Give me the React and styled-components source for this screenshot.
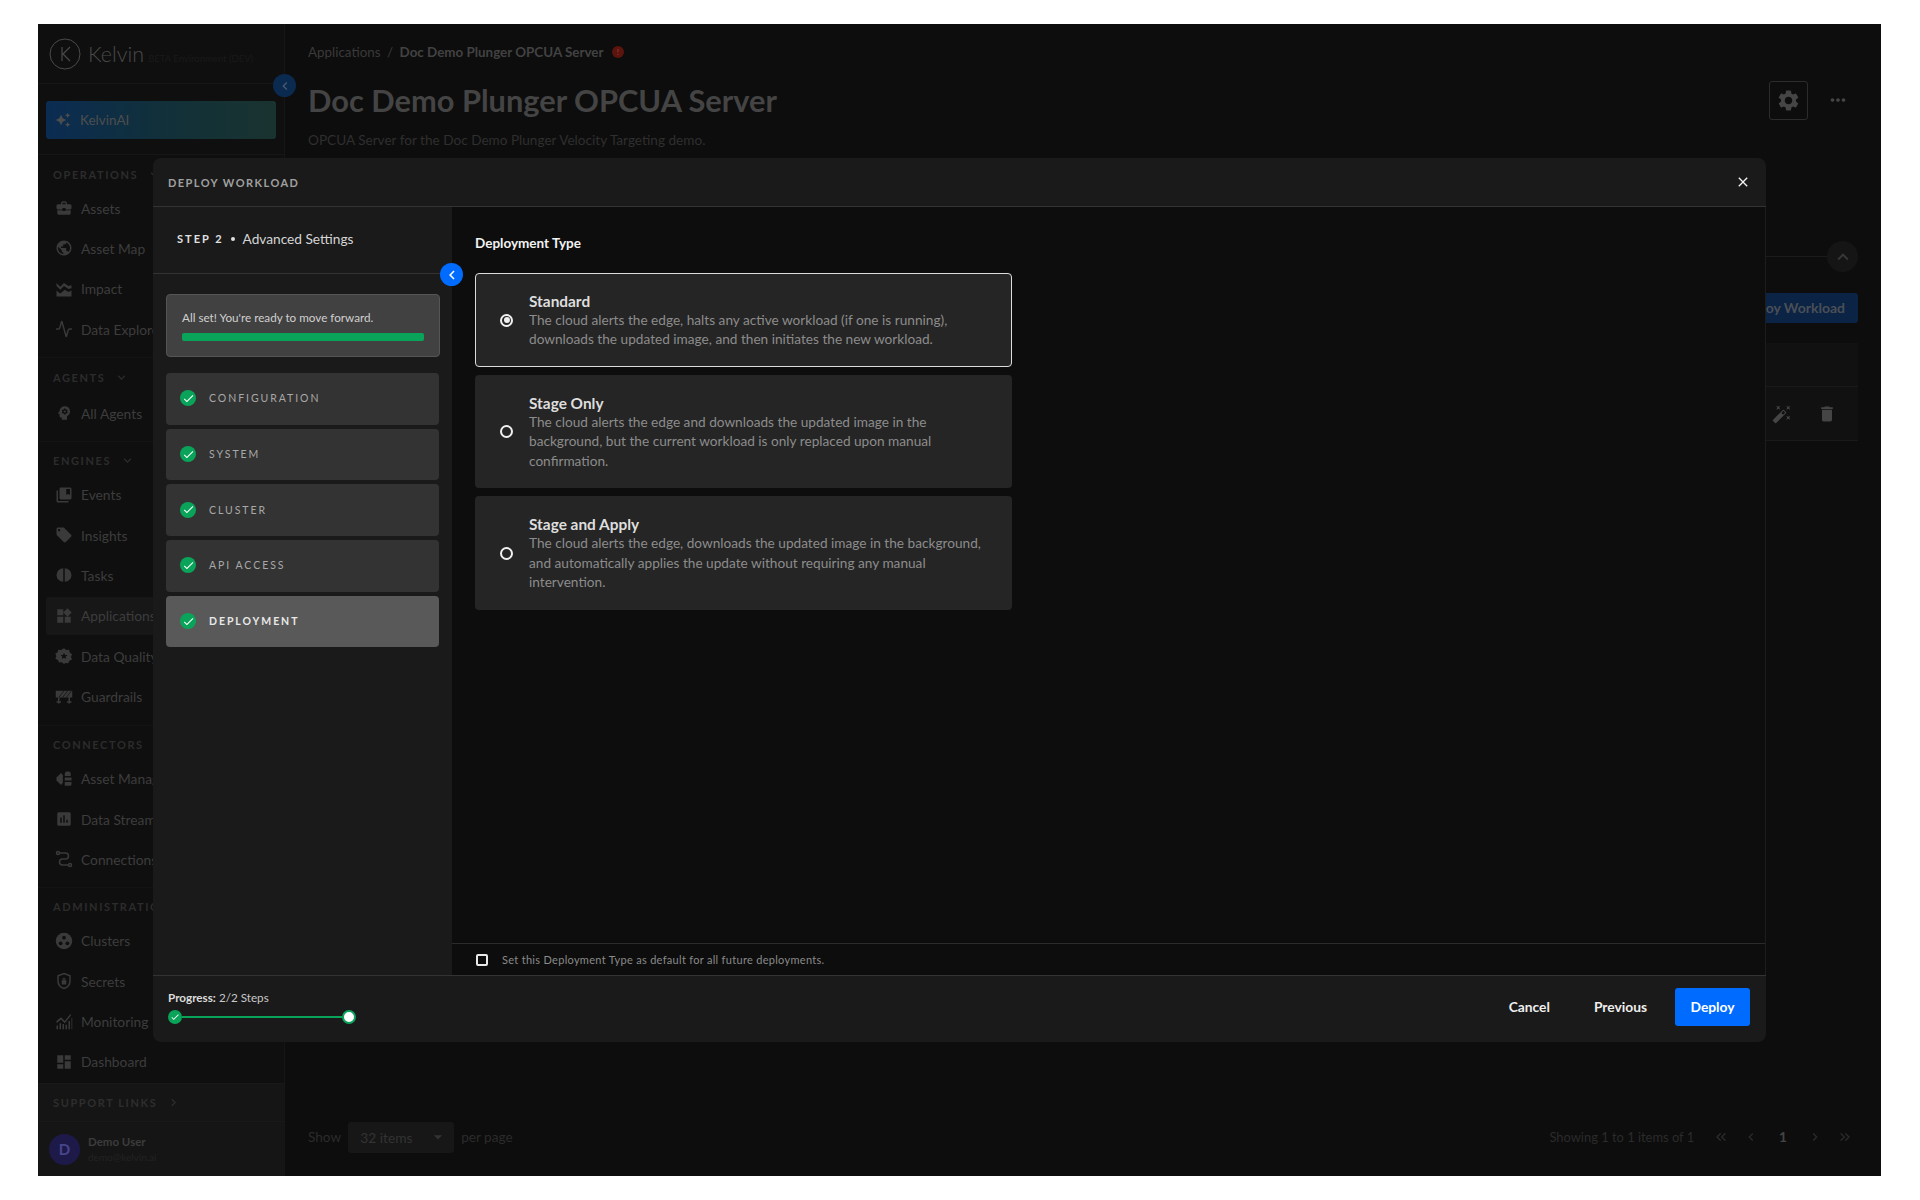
import React from 'react';
import styled, { createGlobalStyle } from 'styled-components';
import {
  MdBusinessCenter,
  MdPublic,
  MdCollectionsBookmark,
  MdLocalOffer,
  MdWidgets,
  MdAssessment,
  MdDashboard,
  MdSettings,
  MdMoreHoriz,
  MdDelete,
  MdAutoFixHigh,
  MdCheck,
  MdClose,
  MdChevronLeft,
  MdExpandMore,
  MdExpandLess,
  MdChevronRight,
  MdArrowDropDown,
  MdAutoAwesome,
  MdPsychology,
} from 'react-icons/md';
import { LuActivity, LuChevronsLeft, LuChevronsRight } from 'react-icons/lu';

const font = `'Lato', 'Open Sans', sans-serif`;

const GlobalStyle = createGlobalStyle`
  html, body {
    margin: 0;
    background: #fff;
  }
  body {
    font-family: ${font};
  }
  * {
    box-sizing: border-box;
  }
`;

const Viewport = styled.div`
  width: 1920px;
  height: 1200px;
  padding: 24px 39px 24px 38px;
`;

const Frame = styled.div`
  position: relative;
  display: flex;
  height: 1152px;
  background: #0d0d0d;
  overflow: hidden;
`;

const Sidebar = styled.aside`
  position: relative;
  display: flex;
  flex-direction: column;
  width: 247px;
  flex-shrink: 0;
  background: #0f0f0f;
  border-right: 1px solid #161616;
`;

const LogoRow = styled.div`
  display: flex;
  align-items: center;
  height: 61px;
  padding-left: 11px;
  border-bottom: 1px solid #161616;
`;

const LogoMark = styled.svg`
  width: 32px;
  height: 32px;
  margin-right: 7px;
`;

const LogoText = styled.span`
  font-size: 21.5px;
  font-weight: 300;
  color: #4a4a4a;
`;

const BetaTag = styled.span`
  margin: 10px 0 0 4px;
  font-size: 9.5px;
  color: #1a1a1a;
  white-space: nowrap;
`;

const CollapseDim = styled.span`
  position: absolute;
  top: 50px;
  right: -12px;
  z-index: 1;
  display: flex;
  align-items: center;
  justify-content: center;
  width: 23px;
  height: 23px;
  border-radius: 50%;
  background: #0b2a50;
  color: #4a5a70;
  font-size: 16px;
`;

const AiWrap = styled.div`
  padding: 17px 8px 15px;
  border-bottom: 1px solid #161616;
`;

const AiButton = styled.div`
  display: flex;
  align-items: center;
  gap: 9px;
  height: 38px;
  padding-left: 9px;
  border-radius: 3px;
  background: linear-gradient(90deg, #0b2c52 0%, #11303a 50%, #19332f 100%);
  color: #4d4d4d;
  font-size: 13.5px;
  svg {
    font-size: 16px;
  }
`;

const Section = styled.div`
  padding: ${(p) => p.$top ?? 6}px 0 ${(p) => p.$bottom ?? 7}px;
  border-bottom: 1px solid #141414;
  &:nth-last-child(2) {
    border-bottom: none;
  }
`;

const SectionLabel = styled.div`
  display: flex;
  align-items: center;
  gap: 9px;
  height: 26px;
  margin-bottom: ${(p) => p.$gap ?? 2}px;
  padding-left: 15px;
  font-size: 11px;
  font-weight: 700;
  letter-spacing: 1.6px;
  color: #2c2c2c;
  white-space: nowrap;
  svg {
    font-size: 15px;
  }
`;

const NavItem = styled.div`
  display: flex;
  align-items: center;
  gap: 8px;
  height: 38px;
  margin: 0 0 2.33px 8px;
  padding-left: 9px;
  border-radius: 3px;
  background: ${(p) => (p.$active ? '#171717' : 'transparent')};
  color: #3d3d3d;
  font-size: 13.8px;
  white-space: nowrap;
  svg {
    flex-shrink: 0;
    width: 18px;
    height: 18px;
    color: #3a3a3a;
  }
`;

const SupportArea = styled.div`
  margin-top: auto;
  background: #151515;
  border-top: 1px solid #191919;
`;

const SupportRow = styled.div`
  display: flex;
  align-items: center;
  gap: 9px;
  height: 38px;
  padding-left: 15px;
  font-size: 11px;
  font-weight: 700;
  letter-spacing: 1.6px;
  color: #2e2e2e;
  border-bottom: 1px solid #191919;
  svg {
    font-size: 15px;
  }
`;

const UserRow = styled.div`
  display: flex;
  align-items: center;
  gap: 8px;
  height: 54px;
  padding-left: 11px;
`;

const Avatar = styled.div`
  display: flex;
  align-items: center;
  justify-content: center;
  width: 31px;
  height: 31px;
  border-radius: 50%;
  background: #1d1a4a;
  color: #47468a;
  font-size: 15px;
  font-weight: 700;
`;

const UserName = styled.div`
  font-size: 11.5px;
  font-weight: 700;
  color: #3c3c3c;
`;

const UserMail = styled.div`
  margin-top: 3px;
  font-size: 10px;
  color: #232323;
`;

const Main = styled.main`
  position: relative;
  display: flex;
  flex-direction: column;
  flex: 1;
  padding: 0 23px;
`;

const Breadcrumb = styled.div`
  display: flex;
  align-items: center;
  gap: 6.5px;
  height: 56px;
  font-size: 13.4px;
  color: #3a3a3a;
  strong {
    font-weight: 700;
    color: #424242;
  }
`;

const ErrorDot = styled.span`
  display: flex;
  align-items: center;
  justify-content: center;
  width: 12px;
  height: 12px;
  margin-left: 2px;
  border-radius: 50%;
  background: #5c140e;
  color: #8a3a34;
  font-size: 8px;
  font-weight: 700;
`;

const HeadRow = styled.div`
  display: flex;
  align-items: center;
  justify-content: space-between;
  height: 40px;
`;

const PageTitle = styled.h1`
  margin: 0;
  font-size: 30.8px;
  font-weight: 700;
  color: #444;
`;

const HeadActions = styled.div`
  display: flex;
  align-items: center;
  gap: 19px;
  margin-right: 9px;
`;

const SettingsButton = styled.div`
  display: flex;
  align-items: center;
  justify-content: center;
  width: 39px;
  height: 39px;
  border: 1px solid #2c2c2c;
  border-radius: 3px;
  color: #454545;
  font-size: 25px;
`;

const MoreButton = styled.div`
  display: flex;
  color: #454545;
  font-size: 22px;
`;

const Description = styled.p`
  margin: 12px 0 0;
  font-size: 13.6px;
  color: #2f2f2f;
`;

const RuleRow = styled.div`
  display: flex;
  align-items: center;
  margin: 93px 0 0;
`;

const RuleLine = styled.div`
  flex: 1;
  height: 1px;
  background: #1b1b1b;
`;

const RoundToggle = styled.div`
  display: flex;
  align-items: center;
  justify-content: center;
  width: 31px;
  height: 31px;
  border-radius: 50%;
  background: #151515;
  color: #383838;
  font-size: 22px;
`;

const DeployRow = styled.div`
  display: flex;
  justify-content: flex-end;
  margin-top: 21px;
`;

const DimDeploy = styled.div`
  display: flex;
  align-items: center;
  height: 30px;
  padding: 0 13px 2px;
  border-radius: 3px;
  background: #0b2344;
  color: #4a4f57;
  font-size: 14px;
  font-weight: 700;
`;

const DimTable = styled.div`
  margin-top: 20px;
  background: #111;
`;

const DimTableHead = styled.div`
  height: 44px;
  border-bottom: 1px solid #1a1a1a;
`;

const DimTableRow = styled.div`
  display: flex;
  justify-content: flex-end;
  align-items: center;
  gap: 25px;
  height: 54px;
  padding-right: 21px;
  border-bottom: 1px solid #1a1a1a;
  color: #454545;
  font-size: 20px;
`;

const Pager = styled.div`
  display: flex;
  align-items: center;
  justify-content: space-between;
  margin-top: auto;
  height: 70px;
  padding-bottom: 8px;
  font-size: 13.6px;
  color: #2b2b2b;
`;

const PerPage = styled.div`
  display: flex;
  align-items: center;
  gap: 7px;
`;

const DimSelect = styled.div`
  display: flex;
  align-items: center;
  justify-content: space-between;
  width: 106px;
  height: 31px;
  padding: 0 6px 0 12px;
  border-radius: 3px;
  background: #171717;
  color: #333;
  font-size: 13.8px;
  svg {
    font-size: 20px;
  }
`;

const PageLinks = styled.div`
  display: flex;
  align-items: center;
  gap: 14px;
  margin-right: 5px;
  svg {
    width: 16px;
    height: 16px;
  }
`;

const PageStatus = styled.span`
  margin-right: 5px;
  font-size: 12.9px;
`;

const PageNumber = styled.strong`
  margin: 0 6px;
  color: #444;
  font-weight: 700;
`;

/* modal */

const Modal = styled.div`
  position: absolute;
  top: 134px;
  left: 115px;
  z-index: 2;
  display: flex;
  flex-direction: column;
  width: 1613px;
  height: 884px;
  border-radius: 8px;
  background: #1a1a1a;
  overflow: hidden;
`;

const ModalHeader = styled.header`
  display: flex;
  align-items: center;
  justify-content: space-between;
  flex-shrink: 0;
  height: 49px;
  padding: 0 15px 0 15px;
  border-bottom: 1px solid #333;
`;

const ModalTitle = styled.h2`
  margin: 0;
  font-size: 11px;
  font-weight: 700;
  letter-spacing: 1.45px;
  color: #a0a0a0;
`;

const CloseButton = styled.span`
  display: flex;
  color: #f2f2f2;
  font-size: 16px;
`;

const ModalBody = styled.div`
  display: flex;
  flex: 1;
  min-height: 0;
`;

const StepPanel = styled.nav`
  position: relative;
  display: flex;
  flex-direction: column;
  width: 299px;
  flex-shrink: 0;
`;

const StepHeading = styled.div`
  display: flex;
  align-items: center;
  height: 67px;
  padding: 0 0 3px 24px;
  border-bottom: 1px solid #333;
  font-size: 13.7px;
  color: #d5d5d5;
`;

const StepNumber = styled.span`
  font-size: 11px;
  font-weight: 700;
  letter-spacing: 2px;
  color: #e0e0e0;
`;

const StepDot = styled.span`
  width: 4px;
  height: 4px;
  margin: 0 8px 0 7px;
  border-radius: 50%;
  background: #e0e0e0;
`;

const PanelToggle = styled.span`
  position: absolute;
  top: 56px;
  right: -11px;
  z-index: 1;
  display: flex;
  align-items: center;
  justify-content: center;
  width: 23px;
  height: 23px;
  border-radius: 50%;
  background: #006cff;
  color: #fff;
  font-size: 18px;
`;

const ReadyCard = styled.div`
  height: 63px;
  margin: 20px 12px 16px 13px;
  padding: 15px 15px 0;
  border: 1px solid #555;
  border-radius: 4px;
  background: #414141;
  font-size: 11.7px;
  line-height: 14px;
  color: #d0d0d0;
`;

const ReadyBar = styled.div`
  height: 8px;
  margin-top: 9px;
  border-radius: 2px;
  background: #0aa35a;
`;

const StepList = styled.div`
  display: flex;
  flex-direction: column;
  gap: 4px;
  padding: 0 13px;
`;

const StepItem = styled.div`
  display: flex;
  align-items: center;
  gap: 13px;
  height: 51.7px;
  padding: 0 0 1px 14px;
  border-radius: 4px;
  background: ${(p) => (p.$active ? '#595959' : '#333')};
  font-size: 10.5px;
  font-weight: ${(p) => (p.$active ? 700 : 400)};
  letter-spacing: 1.95px;
  color: ${(p) => (p.$active ? '#e8e8e8' : '#a8a8a8')};
`;

const CheckBadge = styled.span`
  display: flex;
  align-items: center;
  justify-content: center;
  flex-shrink: 0;
  width: ${(p) => p.$size || 16}px;
  height: ${(p) => p.$size || 16}px;
  border-radius: 50%;
  background: #0aa35a;
  color: #fff;
  font-size: ${(p) => (p.$size ? p.$size - 4 : 13)}px;
`;

const Content = styled.section`
  display: flex;
  flex-direction: column;
  flex: 1;
  min-width: 0;
  background: #0d0d0d;
  border-right: 1px solid #1d1d1d;
`;

const ContentInner = styled.div`
  flex: 1;
  padding: 28px 23px 0;
`;

const FieldLabel = styled.div`
  margin-bottom: 21px;
  font-size: 13.5px;
  font-weight: 700;
  line-height: 17px;
  color: #f2f2f2;
`;

const OptionList = styled.div`
  display: flex;
  flex-direction: column;
  gap: 8px;
  width: 537px;
`;

const OptionCard = styled.div`
  display: flex;
  align-items: center;
  gap: 16px;
  padding: 16.5px 0 16.5px 24px;
  border: 1px solid ${(p) => (p.$selected ? '#dcdcdc' : 'transparent')};
  border-radius: 4px;
  background: #252525;
`;

const Radio = styled.span`
  display: flex;
  align-items: center;
  justify-content: center;
  flex-shrink: 0;
  width: 13px;
  height: 13px;
  border: 2px solid #f0f0f0;
  border-radius: 50%;
  &::after {
    content: '';
    display: ${(p) => (p.$checked ? 'block' : 'none')};
    width: 6px;
    height: 6px;
    border-radius: 50%;
    background: #f0f0f0;
  }
`;

const OptionBody = styled.div`
  width: 465px;
`;

const OptionTitle = styled.div`
  font-size: 15.4px;
  font-weight: 700;
  line-height: 20.5px;
  color: #dedede;
`;

const OptionText = styled.div`
  font-size: 13.65px;
  line-height: 19.3px;
  color: #8c8c8c;
`;

const DefaultRow = styled.label`
  display: flex;
  align-items: center;
  gap: 14px;
  flex-shrink: 0;
  height: 32px;
  padding-left: 24px;
  border-top: 1px solid #2b2b2b;
  font-size: 11px;
  letter-spacing: 0.3px;
  color: #8a8a8a;
`;

const CheckBox = styled.span`
  width: 12px;
  height: 12px;
  border: 2px solid #e8e8e8;
  border-radius: 2px;
`;

const ModalFooter = styled.footer`
  display: flex;
  align-items: center;
  justify-content: space-between;
  flex-shrink: 0;
  height: 67px;
  padding: 0 16px 5px 15px;
  border-top: 1px solid #333;
`;

const ProgressLabel = styled.div`
  margin-bottom: 6px;
  font-size: 11.7px;
  color: #c8c8c8;
  strong {
    font-weight: 700;
    color: #dcdcdc;
  }
`;

const ProgressTrack = styled.div`
  display: flex;
  align-items: center;
  width: 188px;
`;

const ProgressLine = styled.div`
  flex: 1;
  height: 2px;
  background: #0aa35a;
`;

const ProgressEnd = styled.span`
  width: 14px;
  height: 14px;
  border: 2px solid #0aa35a;
  border-radius: 50%;
  background: #fff;
`;

const FooterActions = styled.div`
  display: flex;
  align-items: center;
`;

const TextButton = styled.button`
  height: 38px;
  margin-right: ${(p) => p.$gap}px;
  padding: 0 0 1px;
  border: none;
  background: transparent;
  color: #eee;
  font-family: ${font};
  font-size: 13.8px;
  font-weight: 700;
`;

const PrimaryButton = styled.button`
  width: 75px;
  height: 38px;
  padding: 0 0 1px;
  border: none;
  border-radius: 3px;
  background: #006cff;
  color: #fff;
  font-family: ${font};
  font-size: 13.8px;
  font-weight: 700;
`;

const TasksIcon = () => (
  <svg viewBox="0 0 24 24" fill="currentColor">
    <path d="M11 3v18a9 9 0 0 1 0-18zM13 3a9 9 0 0 1 0 18z" />
  </svg>
);

const ImpactIcon = () => (
  <svg viewBox="0 0 24 24" fill="currentColor">
    <path d="M2 4l5 5 5-5 6 4 4-1v4l-4 1-6-4-5 5-5-5z" />
    <path d="M2 14l5 4 6-5 5 3 4-2v8H2z" />
  </svg>
);

const QualityIcon = () => (
  <svg viewBox="0 0 24 24" fill="currentColor" fillRule="evenodd">
    <path d="M12 2l3 2.4 3.8-.2.9 3.7 3 2.4-1.4 3.5 1.4 3.5-3.6 1.4-1.2 3.6-3.8-.4L12 23l-3-2.1-3.8.4L4 17.7.4 16.3 1.8 12.8.4 9.3l3-1.4.9-3.7 3.8.2z" transform="translate(0 -0.5)" />
    <path fill="#0f0f0f" d="M12 7.5l1.4 3 3.2.3-2.4 2.1.7 3.2-2.9-1.7-2.9 1.7.7-3.2-2.4-2.1 3.2-.3z" />
  </svg>
);

const GuardrailIcon = () => (
  <svg viewBox="0 0 24 24" fill="currentColor">
    <path d="M1 5h22v9H1zM4 14h2v8H4zM18 14h2v8h-2zM2 19h6v2H2zM16 19h6v2h-6z" />
    <path stroke="#0f0f0f" strokeWidth="1" d="M5 14l7-9M10 14l7-9M15 14l7-9" />
  </svg>
);

const AssetManageIcon = () => (
  <svg viewBox="0 0 24 24" fill="currentColor">
    <path d="M8 4l2.5 3v10L8 20l-6-6v-4z" />
    <path d="M13 8V5a3 3 0 0 1 3-3h2a3 3 0 0 1 3 3v3zM13 10h9v4h-9zM13 16h9v3a2 2 0 0 1-2 2h-7z" />
  </svg>
);

const ConnectionIcon = () => (
  <svg viewBox="0 0 24 24" fill="none" stroke="currentColor" strokeWidth="2">
    <circle cx="4" cy="4" r="2" />
    <circle cx="20" cy="20" r="2" />
    <path d="M6 4h8a3.5 3.5 0 0 1 0 8h-4a3.5 3.5 0 0 0 0 8h8" />
  </svg>
);

const ClusterIcon = () => (
  <svg viewBox="0 0 24 24" fill="currentColor">
    <circle cx="12" cy="12" r="11" />
    <g fill="#0f0f0f">
      <circle cx="12" cy="7.5" r="2.5" />
      <circle cx="7.5" cy="15" r="2.5" />
      <circle cx="16.5" cy="15" r="2.5" />
    </g>
  </svg>
);

const SecretIcon = () => (
  <svg viewBox="0 0 24 24" fill="none" stroke="currentColor" strokeWidth="2">
    <path d="M12 2l8 3v7c0 5-3.4 8.5-8 10-4.6-1.5-8-5-8-10V5z" />
    <path fill="currentColor" stroke="none" d="M9 11h6v5.5H9zM10.2 11V9.5a1.8 1.8 0 0 1 3.6 0V11h-1.2V9.5a.6.6 0 0 0-1.2 0V11z" />
  </svg>
);

const MonitoringIcon = () => (
  <svg viewBox="0 0 24 24" fill="currentColor">
    <path d="M2 12l6-5 5 5 8-10v3l-8 10-5-5-6 5z" />
    <path d="M2 18h2v5H2zM6 15h2v8H6zM10 16h2v7h-2zM14 17h2v6h-2zM18 12h2v11h-2zM22 8h1v15h-1z" />
  </svg>
);

const navGroups = [
  {
    label: 'OPERATIONS',
    chevron: true,
    items: [
      ['Assets', MdBusinessCenter],
      ['Asset Map', MdPublic],
      ['Impact', ImpactIcon],
      ['Data Explorer', LuActivity],
    ],
  },
  { label: 'AGENTS', chevron: true, bottom: 6, labelGap: 4, items: [['All Agents', MdPsychology]] },
  {
    label: 'ENGINES',
    chevron: true,
    items: [
      ['Events', MdCollectionsBookmark],
      ['Insights', MdLocalOffer],
      ['Tasks', TasksIcon],
      ['Applications', MdWidgets, true],
      ['Data Quality', QualityIcon],
      ['Guardrails', GuardrailIcon],
    ],
  },
  {
    label: 'CONNECTORS',
    bottom: 6,
    items: [
      ['Asset Management', AssetManageIcon],
      ['Data Streams', MdAssessment],
      ['Connections', ConnectionIcon],
    ],
  },
  {
    label: 'ADMINISTRATION',
    bottom: 0,
    items: [
      ['Clusters', ClusterIcon],
      ['Secrets', SecretIcon],
      ['Monitoring', MonitoringIcon],
      ['Dashboard', MdDashboard],
    ],
  },
];

const steps = ['CONFIGURATION', 'SYSTEM', 'CLUSTER', 'API ACCESS', 'DEPLOYMENT'];

const options = [
  {
    title: 'Standard',
    text: 'The cloud alerts the edge, halts any active workload (if one is running), downloads the updated image, and then initiates the new workload.',
    selected: true,
  },
  {
    title: 'Stage Only',
    text: 'The cloud alerts the edge and downloads the updated image in the background, but the current workload is only replaced upon manual confirmation.',
  },
  {
    title: 'Stage and Apply',
    text: 'The cloud alerts the edge, downloads the updated image in the background, and automatically applies the update without requiring any manual intervention.',
  },
];

const App = () => (
  <Viewport>
    <GlobalStyle />
    <Frame>
      <Sidebar>
        <LogoRow>
          <LogoMark viewBox="0 0 32 32" fill="none" stroke="#4a4a4a">
            <circle cx="16" cy="16" r="15" strokeWidth="1" />
            <path d="M13 9v14M21 9l-7 7 7 7" strokeWidth="1.2" />
          </LogoMark>
          <LogoText>Kelvin</LogoText>
          <BetaTag>BETA Environment (DEV)</BetaTag>
        </LogoRow>
        <CollapseDim>
          <MdChevronLeft />
        </CollapseDim>
        <AiWrap>
          <AiButton>
            <MdAutoAwesome />
            KelvinAI
          </AiButton>
        </AiWrap>
        {navGroups.map((group) => (
          <Section key={group.label} $bottom={group.bottom}>
            <SectionLabel $gap={group.labelGap}>
              {group.label}
              {group.chevron && <MdExpandMore />}
            </SectionLabel>
            {group.items.map(([name, Icon, active]) => (
              <NavItem key={name} $active={active}>
                <Icon />
                {name}
              </NavItem>
            ))}
          </Section>
        ))}
        <SupportArea>
          <SupportRow>
            SUPPORT LINKS
            <MdChevronRight />
          </SupportRow>
          <UserRow>
            <Avatar>D</Avatar>
            <div>
              <UserName>Demo User</UserName>
              <UserMail>demo@kelvin.ai</UserMail>
            </div>
          </UserRow>
        </SupportArea>
      </Sidebar>

      <Main>
        <Breadcrumb>
          Applications <span>/</span> <strong>Doc Demo Plunger OPCUA Server</strong>
          <ErrorDot>!</ErrorDot>
        </Breadcrumb>
        <HeadRow>
          <PageTitle>Doc Demo Plunger OPCUA Server</PageTitle>
          <HeadActions>
            <SettingsButton>
              <MdSettings />
            </SettingsButton>
            <MoreButton>
              <MdMoreHoriz />
            </MoreButton>
          </HeadActions>
        </HeadRow>
        <Description>OPCUA Server for the Doc Demo Plunger Velocity Targeting demo.</Description>
        <RuleRow>
          <RuleLine />
          <RoundToggle>
            <MdExpandLess />
          </RoundToggle>
        </RuleRow>
        <DeployRow>
          <DimDeploy>Deploy Workload</DimDeploy>
        </DeployRow>
        <DimTable>
          <DimTableHead />
          <DimTableRow>
            <MdAutoFixHigh />
            <MdDelete />
          </DimTableRow>
        </DimTable>
        <Pager>
          <PerPage>
            Show
            <DimSelect>
              32 items
              <MdArrowDropDown />
            </DimSelect>
            per page
          </PerPage>
          <PageLinks>
            <PageStatus>Showing 1 to 1 items of 1</PageStatus>
            <LuChevronsLeft />
            <MdChevronLeft />
            <PageNumber>1</PageNumber>
            <MdChevronRight />
            <LuChevronsRight />
          </PageLinks>
        </Pager>
      </Main>

      <Modal>
        <ModalHeader>
          <ModalTitle>DEPLOY WORKLOAD</ModalTitle>
          <CloseButton>
            <MdClose />
          </CloseButton>
        </ModalHeader>
        <ModalBody>
          <StepPanel>
            <StepHeading>
              <StepNumber>STEP 2</StepNumber>
              <StepDot />
              Advanced Settings
            </StepHeading>
            <PanelToggle>
              <MdChevronLeft />
            </PanelToggle>
            <ReadyCard>
              All set! You&apos;re ready to move forward.
              <ReadyBar />
            </ReadyCard>
            <StepList>
              {steps.map((step) => (
                <StepItem key={step} $active={step === 'DEPLOYMENT'}>
                  <CheckBadge>
                    <MdCheck />
                  </CheckBadge>
                  {step}
                </StepItem>
              ))}
            </StepList>
          </StepPanel>
          <Content>
            <ContentInner>
              <FieldLabel>Deployment Type</FieldLabel>
              <OptionList>
                {options.map((option) => (
                  <OptionCard key={option.title} $selected={option.selected}>
                    <Radio $checked={option.selected} />
                    <OptionBody>
                      <OptionTitle>{option.title}</OptionTitle>
                      <OptionText>{option.text}</OptionText>
                    </OptionBody>
                  </OptionCard>
                ))}
              </OptionList>
            </ContentInner>
            <DefaultRow>
              <CheckBox />
              Set this Deployment Type as default for all future deployments.
            </DefaultRow>
          </Content>
        </ModalBody>
        <ModalFooter>
          <div>
            <ProgressLabel>
              <strong>Progress:</strong> 2/2 Steps
            </ProgressLabel>
            <ProgressTrack>
              <CheckBadge $size={14}>
                <MdCheck />
              </CheckBadge>
              <ProgressLine />
              <ProgressEnd />
            </ProgressTrack>
          </div>
          <FooterActions>
            <TextButton $gap={44}>Cancel</TextButton>
            <TextButton $gap={28}>Previous</TextButton>
            <PrimaryButton>Deploy</PrimaryButton>
          </FooterActions>
        </ModalFooter>
      </Modal>
    </Frame>
  </Viewport>
);

export default App;
